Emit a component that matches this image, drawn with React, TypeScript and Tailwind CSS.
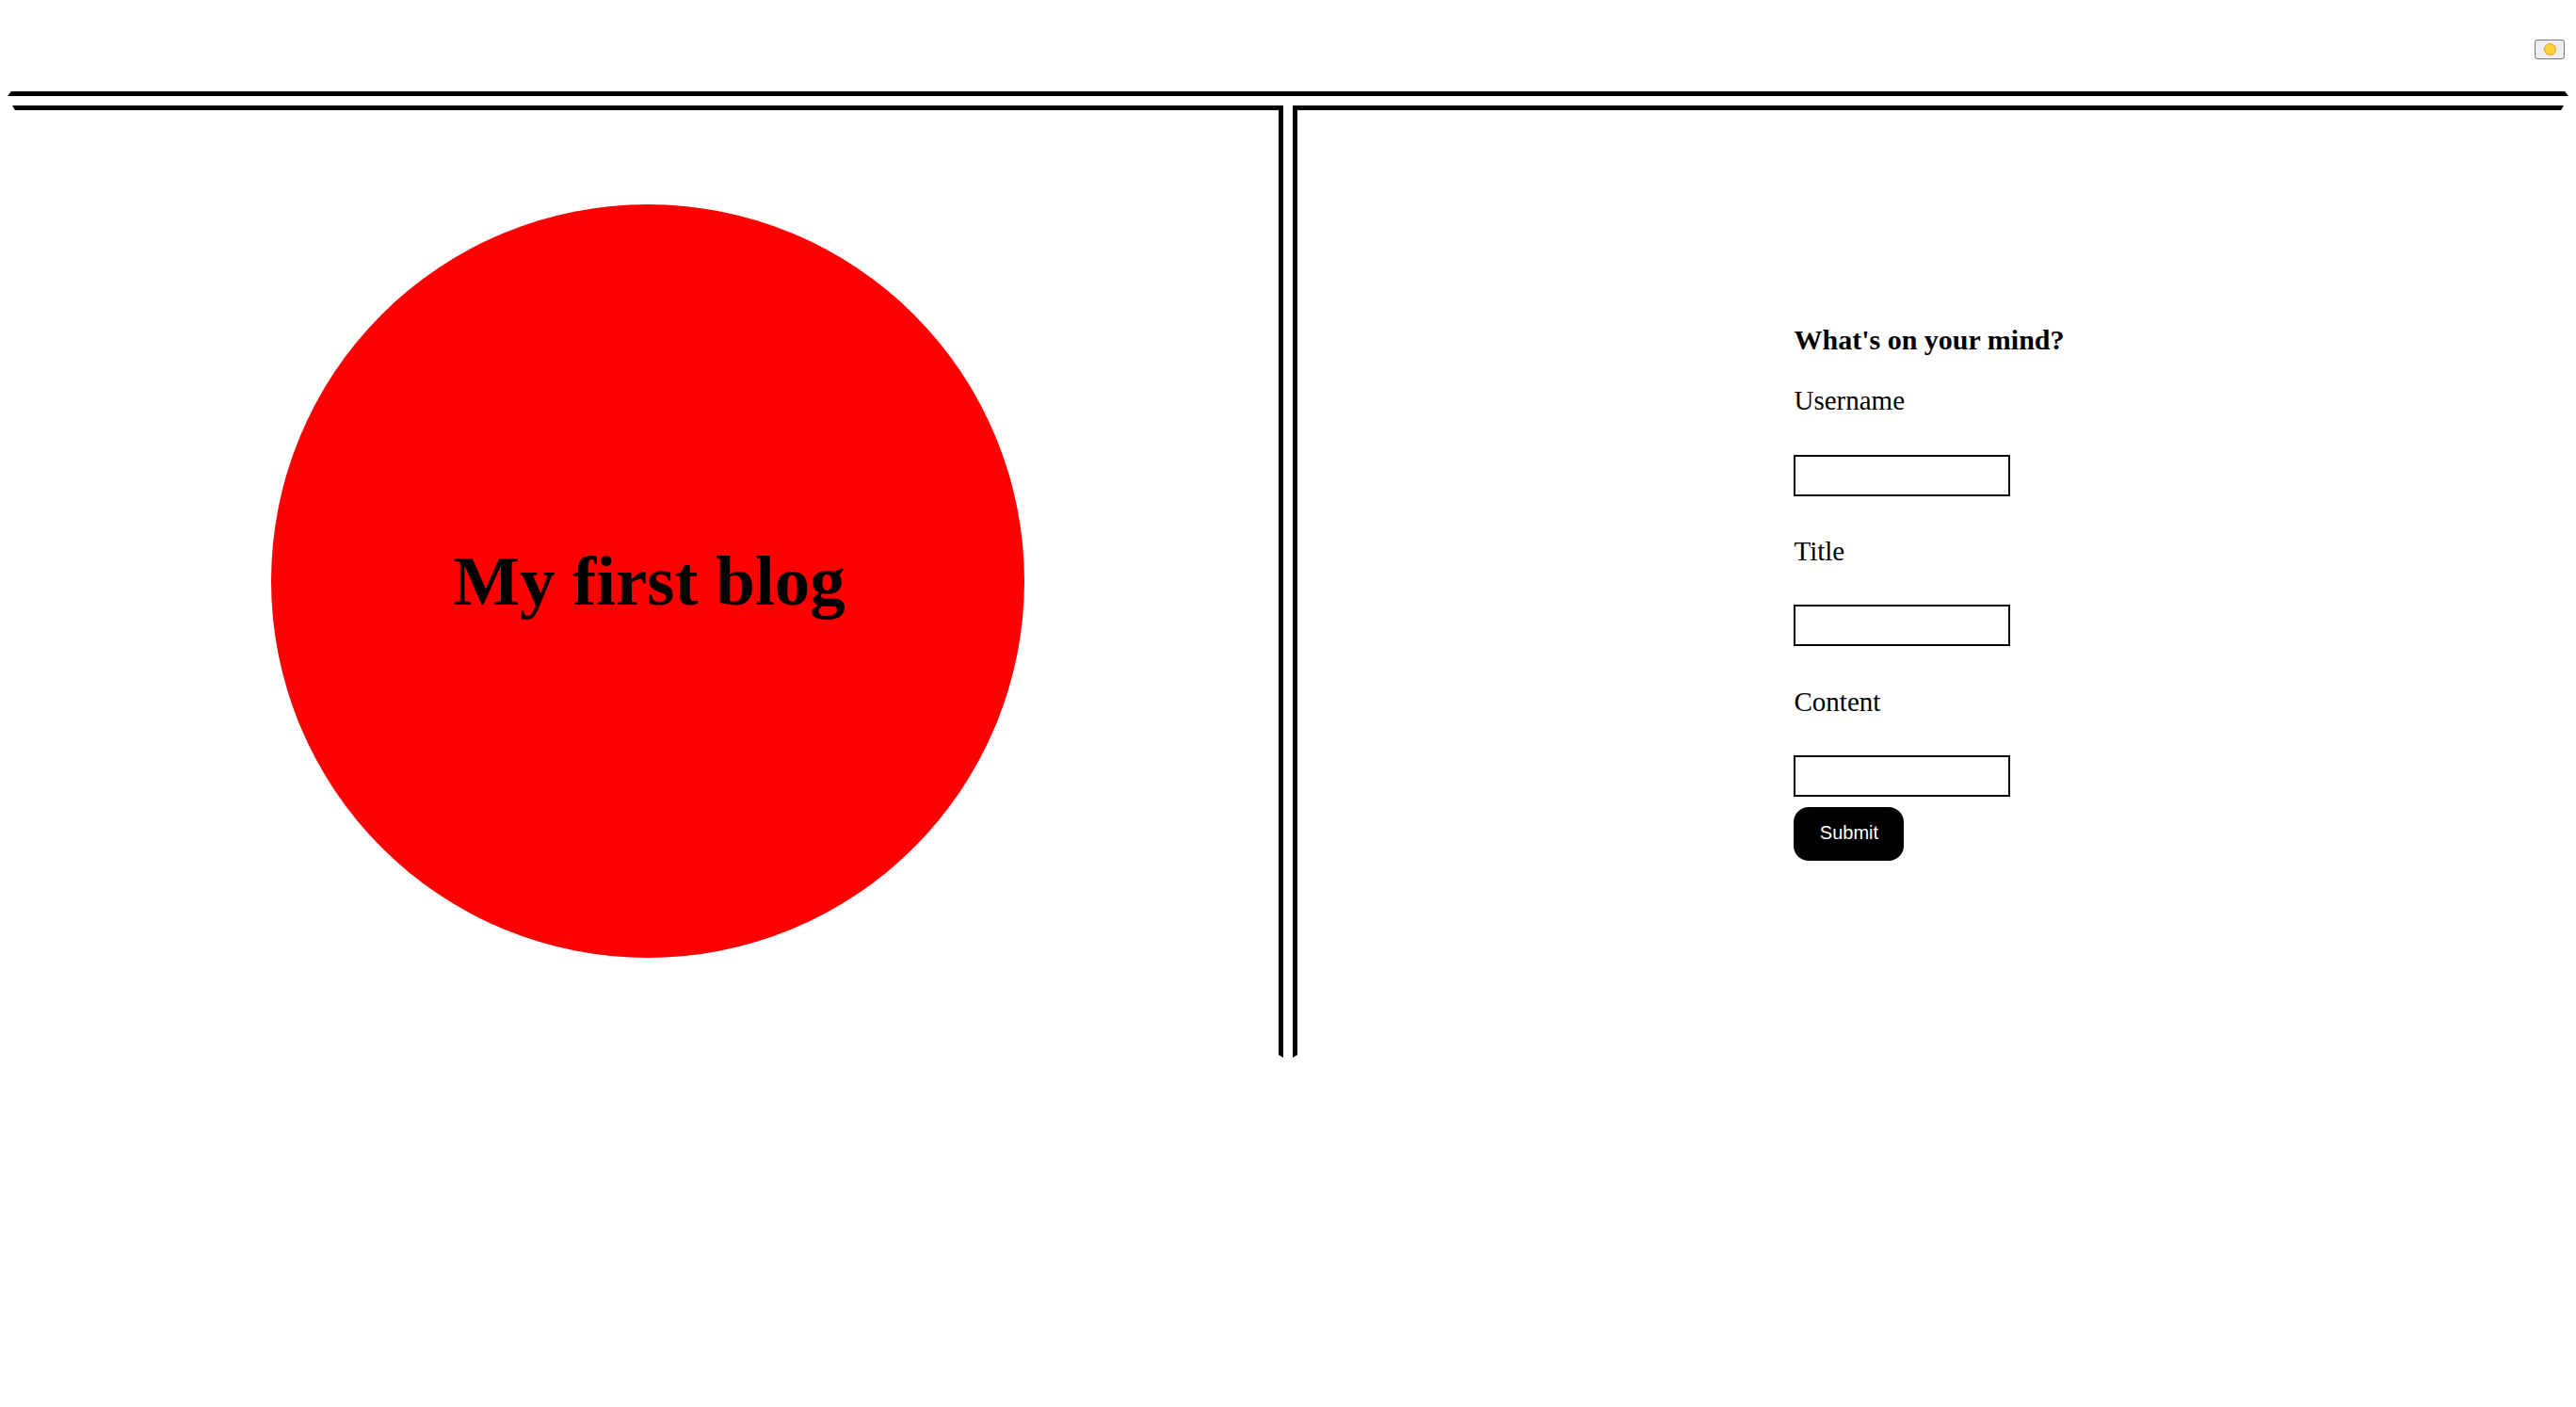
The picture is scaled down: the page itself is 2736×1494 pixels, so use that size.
import React from "react";

export default function App() {
  return (
    <div className="w-full h-[1494px] bg-white overflow-hidden font-['Liberation_Serif',serif] text-black">
      {/* header */}
      <div className="mx-2 h-[102px] border-b-[5px] border-b-black border-x-4 border-x-transparent flex justify-end items-start pt-[42px]">
        <button
          type="button"
          aria-label="theme"
          className="w-[32px] h-[21px] bg-[#efefef] border border-[#767676] rounded-[3px] flex items-center justify-center"
        >
          <span className="block w-[13px] h-[13px] rounded-full bg-[#ffd43b] border-[1.5px] border-[#f7901e]" />
        </button>
      </div>

      {/* panels */}
      <div className="mx-[13px] mt-[10px] flex gap-[10px]">
        <div className="w-[1350px] h-[1011px] border-t-[5px] border-t-black border-r-[5px] border-r-black border-l-[3px] border-l-transparent border-b-[3px] border-b-transparent flex items-center justify-center pb-[4px] pl-[2px]">
          <div className="w-[800px] h-[800px] rounded-full bg-[#ff0000] flex items-center justify-center">
            <h1 className="text-[75px] leading-none font-bold pl-[3px]">My first blog</h1>
          </div>
        </div>
        <div className="w-[1350px] h-[1011px] border-t-[5px] border-t-black border-l-[5px] border-l-black border-r-[3px] border-r-transparent border-b-[3px] border-b-transparent flex justify-center items-start pt-[224px]">
          <form className="flex flex-col items-start w-max" onSubmit={(e) => e.preventDefault()}>
            <h3 className="text-[30px] leading-[40px] font-bold">What's on your mind?</h3>
            <label className="mt-[28px] text-[29px] leading-[32px]">Username</label>
            <input type="text" className="mt-[42px] w-[230px] h-[44px] border-2 border-black bg-white" />
            <label className="mt-[42px] text-[29px] leading-[32px]">Title</label>
            <input type="text" className="mt-[41px] w-[230px] h-[44px] border-2 border-black bg-white" />
            <label className="mt-[43px] text-[29px] leading-[32px]">Content</label>
            <input type="text" className="mt-[41px] w-[230px] h-[44px] border-2 border-black bg-white" />
            <button
              type="submit"
              className="mt-[11px] w-[117px] h-[57px] rounded-[16px] bg-black text-white text-[20px] font-['Liberation_Sans',Arial,sans-serif] flex items-center justify-center pb-[3px]"
            >
              Submit
            </button>
          </form>
        </div>
      </div>
    </div>
  );
}
